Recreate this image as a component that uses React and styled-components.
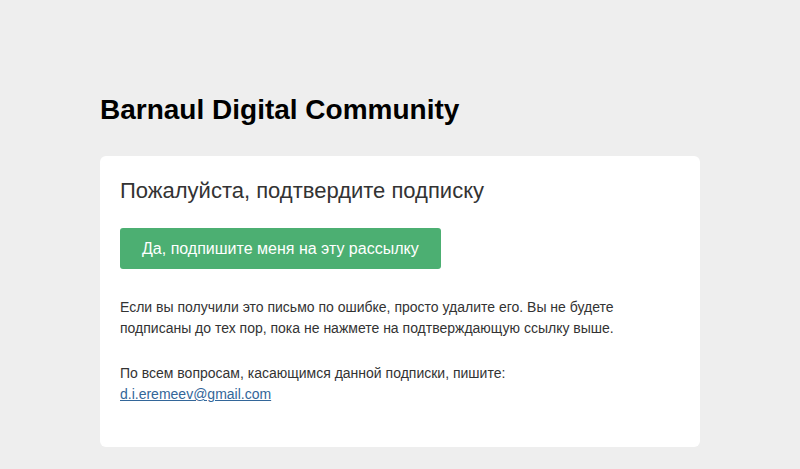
import styled, { createGlobalStyle } from 'styled-components';

const GlobalStyle = createGlobalStyle`
  html, body {
    margin: 0;
    padding: 0;
    background: #eeeeee;
    font-family: "Liberation Sans", Arial, sans-serif;
  }
`;

const Page = styled.div`
  width: 600px;
  margin: 0 auto;
  padding-top: 90px;
`;

const Brand = styled.h1`
  margin: 0 0 26px;
  font-size: 28px;
  line-height: 40px;
  font-weight: bold;
  color: #000;
`;

const Card = styled.div`
  background: #fff;
  border-radius: 6px;
  padding: 20px 20px 42px;
`;

const Heading = styled.h2`
  margin: 0 0 22px;
  font-size: 22px;
  line-height: 30px;
  font-weight: normal;
  color: #333;
`;

const Button = styled.a`
  display: inline-block;
  background: #4caf72;
  color: #fff;
  font-size: 16px;
  line-height: 41px;
  padding: 0 22px;
  border-radius: 3px;
  text-decoration: none;
  margin-bottom: 28px;
  vertical-align: top;
`;

const Text = styled.p`
  margin: 0 0 24px;
  font-size: 14px;
  line-height: 21px;
  color: #333;

  &:last-child {
    margin-bottom: 0;
  }
`;

const Mail = styled.a`
  color: #336699;
  text-decoration: underline;
`;

export default function App() {
  return (
    <>
      <GlobalStyle />
      <Page>
        <Brand>Barnaul Digital Community</Brand>
        <Card>
          <Heading>Пожалуйста, подтвердите подписку</Heading>
          <div>
            <Button href="#">Да, подпишите меня на эту рассылку</Button>
          </div>
          <Text>
            Если вы получили это письмо по ошибке, просто удалите его. Вы не будете
            подписаны до тех пор, пока не нажмете на подтверждающую ссылку выше.
          </Text>
          <Text>
            По всем вопросам, касающимся данной подписки, пишите:
            <br />
            <Mail href="#">d.i.eremeev@gmail.com</Mail>
          </Text>
        </Card>
      </Page>
    </>
  );
}
